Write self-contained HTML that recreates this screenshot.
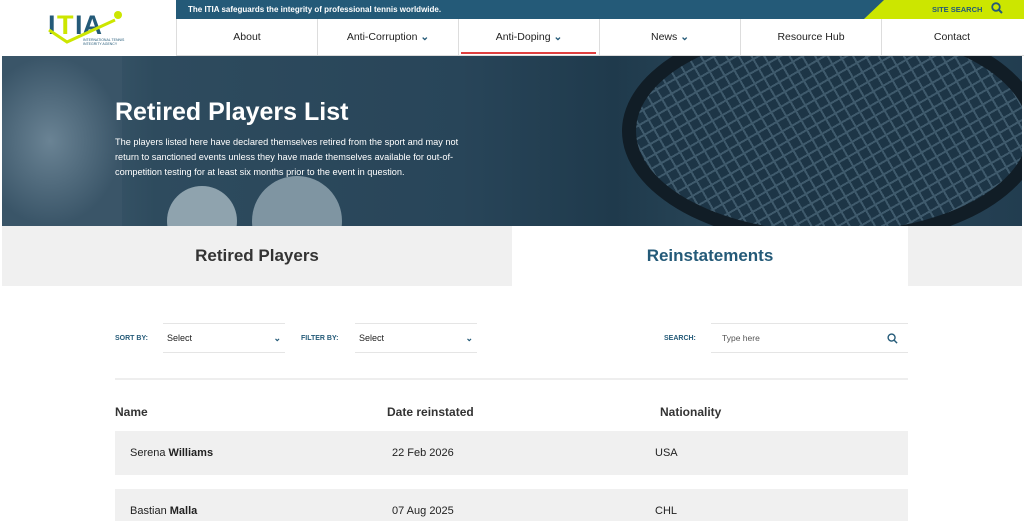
<!DOCTYPE html>
<html><head><meta charset="utf-8"><style>
*{margin:0;padding:0;box-sizing:border-box}
html,body{width:1024px;height:521px;overflow:hidden}
body{background:#fff;font-family:"Liberation Sans",sans-serif;position:relative}
.a{position:absolute}
.top{left:176px;top:0;width:848px;height:19px;background:#245a78;color:#fff;font-size:8px;font-weight:bold;line-height:19px;padding-left:12px}
.lime{right:0;top:0;width:160px;height:19px;background:#cce600;clip-path:polygon(20px 0,100% 0,100% 100%,0 100%);font-size:7.5px;font-weight:bold;color:#245a78;line-height:19px;padding-left:68px}
.nav{top:19px;left:176px;height:37px;display:flex}
.nav div{width:141px;border-left:1px solid #ddd;text-align:center;font-size:10.5px;line-height:37px;color:#222}
.hero{left:2px;top:56px;width:1020px;height:170px;background:linear-gradient(90deg,#4a6678 0%,#2e4b5e 15%,#284559 45%,#1f3a4c 60%,#2d4a5c 75%,#223d50 100%);overflow:hidden}
h1{position:absolute;left:115px;top:98px;color:#fff;font-size:25px;font-weight:bold}
.hp{left:115px;top:135px;width:350px;color:#fff;font-size:9.2px;line-height:15px}
.tab{top:226px;height:60px;font-size:17px;font-weight:bold;line-height:60px;text-align:center}
.lbl{font-size:7px;color:#245a78;font-weight:bold;top:335px}
.sel{top:323px;height:30px;border-top:1px solid #e5e5e5;border-bottom:1px solid #e5e5e5;font-size:9px;line-height:29px;padding-left:4px;color:#222}
.th{top:405px;font-size:12px;font-weight:bold;color:#333}
.row{left:115px;width:793px;height:44px;background:#f0f0f0;font-size:11px;color:#222}
.row span{position:absolute;top:16px}
</style></head><body>
<svg class="a" style="left:45px;top:8px" width="90" height="40" viewBox="0 0 90 40">
<text x="3" y="26" font-family="Liberation Sans" font-weight="bold" font-size="27" fill="#245a78">I</text>
<text x="12" y="26" font-family="Liberation Sans" font-weight="bold" font-size="27" fill="#cce600">T</text>
<text x="30" y="26" font-family="Liberation Sans" font-weight="bold" font-size="27" fill="#245a78">IA</text>
<circle cx="73" cy="7" r="4" fill="#cce600"/>
<path d="M4 22 L22 34 L70 12" stroke="#cce600" stroke-width="3" fill="none"/>
<text x="38" y="33" font-size="3.5" fill="#245a78" font-family="Liberation Sans">INTERNATIONAL TENNIS</text>
<text x="38" y="37" font-size="3.5" fill="#245a78" font-family="Liberation Sans">INTEGRITY AGENCY</text>
</svg>
<div class="a top">The ITIA safeguards the integrity of professional tennis worldwide.</div>
<div class="a lime">SITE SEARCH <svg width="12" height="12" viewBox="0 0 12 12" style="vertical-align:-2px;margin-left:6px"><circle cx="5" cy="5" r="3.8" stroke="#245a78" stroke-width="1.8" fill="none"/><path d="M8 8l3 3" stroke="#245a78" stroke-width="2"/></svg></div>
<div class="a nav"><div>About</div><div>Anti-Corruption <b style="color:#245a78">⌄</b></div><div style="position:relative">Anti-Doping <b style="color:#245a78">⌄</b><i style="position:absolute;left:2px;right:3px;bottom:2px;height:2px;background:#e04040"></i></div><div>News <b style="color:#245a78">⌄</b></div><div>Resource Hub</div><div>Contact</div></div>
<div class="a" style="left:176px;top:55px;width:848px;height:1px;background:#ddd"></div>
<div class="a hero">
<div class="a" style="left:0;top:0;width:120px;height:170px;background:radial-gradient(ellipse at 40% 50%,#6a8394,#3a5568 70%)"></div>
<div class="a" style="left:165px;top:130px;width:70px;height:70px;border-radius:50%;background:#8fa3ae"></div>
<div class="a" style="left:250px;top:120px;width:90px;height:90px;border-radius:50%;background:#7f95a2"></div>
<div class="a" style="left:620px;top:-40px;width:420px;height:230px;border-radius:50%;border:14px solid #111d26;background:repeating-linear-gradient(60deg,#3f5a6c 0 2px,transparent 2px 11px),repeating-linear-gradient(-30deg,#3f5a6c 0 2px,#1d3546 2px 11px)"></div>
</div>
<h1>Retired Players List</h1>
<div class="a hp">The players listed here have declared themselves retired from the sport and may not return to sanctioned events unless they have made themselves available for out-of-competition testing for at least six months prior to the event in question.</div>
<div class="a tab" style="left:2px;width:510px;background:#f0f0f0;color:#333">Retired Players</div>
<div class="a tab" style="left:512px;width:396px;background:#fff;color:#245a78">Reinstatements</div>
<div class="a tab" style="left:908px;width:114px;background:#f0f0f0"></div>
<div class="a lbl" style="left:115px">SORT BY:</div>
<div class="a sel" style="left:163px;width:122px">Select<span style="position:absolute;right:4px;color:#245a78;font-weight:bold">⌄</span></div>
<div class="a lbl" style="left:301px">FILTER BY:</div>
<div class="a sel" style="left:355px;width:122px">Select<span style="position:absolute;right:4px;color:#245a78;font-weight:bold">⌄</span></div>
<div class="a lbl" style="left:664px">SEARCH:</div>
<div class="a sel" style="left:711px;width:197px;padding-left:11px;color:#555;font-size:8.5px">Type here<svg style="position:absolute;right:10px;top:9px" width="11" height="11" viewBox="0 0 12 12"><circle cx="5" cy="5" r="3.8" stroke="#245a78" stroke-width="1.5" fill="none"/><path d="M8 8l3 3" stroke="#245a78" stroke-width="1.6"/></svg></div>
<div class="a" style="left:115px;top:378px;width:793px;height:2px;background:#eee"></div>
<div class="a th" style="left:115px">Name</div>
<div class="a th" style="left:387px">Date reinstated</div>
<div class="a th" style="left:660px">Nationality</div>
<div class="a row" style="top:431px"><span style="left:15px">Serena <b>Williams</b></span><span style="left:277px">22 Feb 2026</span><span style="left:540px">USA</span></div>
<div class="a row" style="top:489px"><span style="left:15px">Bastian <b>Malla</b></span><span style="left:277px">07 Aug 2025</span><span style="left:540px">CHL</span></div>
</body></html>
